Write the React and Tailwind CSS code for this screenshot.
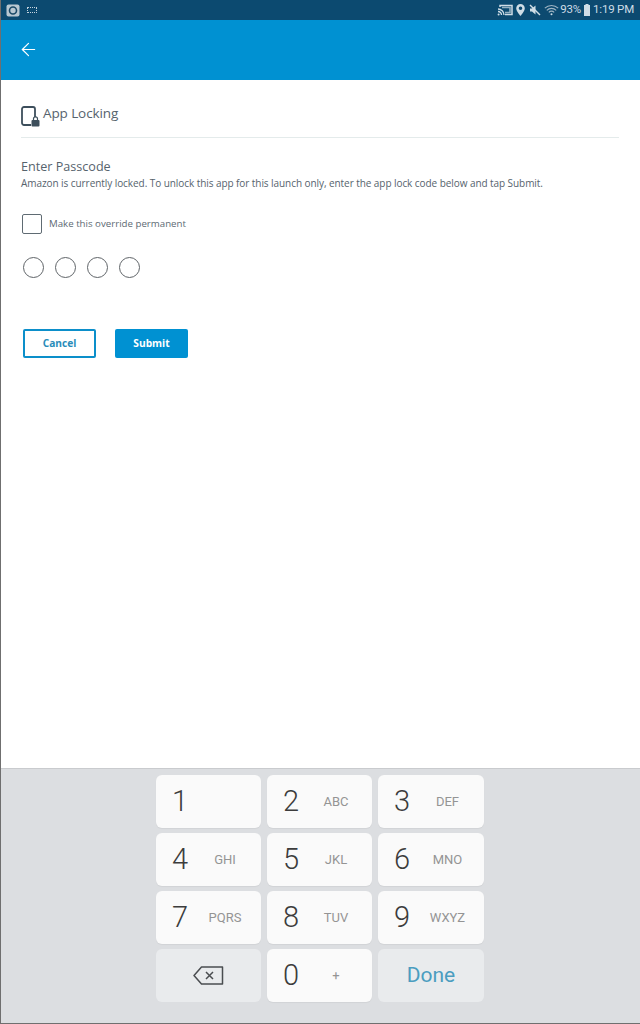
import { ArrowLeft } from "lucide-react";

const keys = [
    ["1", ""], ["2", "ABC"], ["3", "DEF"],
    ["4", "GHI"], ["5", "JKL"], ["6", "MNO"],
    ["7", "PQRS"], ["8", "TUV"], ["9", "WXYZ"],
];

function NumKey({ num, sub }) {
    return (
        <div className="relative h-[53px] rounded-md bg-[#fafafa] shadow-[0_1px_1px_rgba(0,0,0,0.05)]">
            <span className="absolute left-[16px] top-[7px] text-[29px] leading-[38px] font-light text-[#3c3c3c]" style={{ fontFamily: "Roboto" }}>{num}</span>
            <span className="absolute left-[46px] right-[13px] top-[17px] text-center text-[13px] leading-[20px] text-[#949494]" style={{ fontFamily: "Roboto" }}>{sub}</span>
        </div>
    );
}

export default function App() {
    return (
        <div className="flex h-[1024px] w-[640px] flex-col overflow-hidden border-l border-b border-[#6f6f6f] bg-white font-['Open_Sans','Noto_Sans',sans-serif]">
            {/* status bar */}
            <div className="flex h-[20px] items-center justify-between bg-[#0c4a70] pl-[5px] pr-[6px] text-white">
                <div className="flex items-center gap-[7px]">
                    <svg width="14" height="13" viewBox="0 0 14 13">
                        <rect x="0.5" y="0.5" width="13" height="12" rx="2" fill="#b9c8d2" />
                        <circle cx="7" cy="6.5" r="3.5" fill="none" stroke="#1b4a68" strokeWidth="1.6" />
                    </svg>
                    <div className="h-[6px] w-[10px] rounded-[1px] border border-dotted border-[#c7d5df]" />
                </div>
                <div className="flex items-center text-[11.5px] leading-none tracking-[-0.2px] text-[#cfdde6] font-['Roboto',sans-serif]">
                    <svg width="16" height="12" viewBox="0 0 16 12" fill="none" stroke="#cfdde6" className="mr-[3px]">
                        <path d="M3 3V1.5h12v9H8" strokeWidth="1.5" />
                        <path d="M1 5a6 6 0 0 1 6 6M1 7.5A3.5 3.5 0 0 1 4.5 11" strokeWidth="1.3" />
                        <path d="M5 3.5h8v5H8" strokeWidth="1.6" opacity="0.7" />
                        <circle cx="1.6" cy="10.4" r="1" fill="#cfdde6" stroke="none" />
                    </svg>
                    <svg width="9" height="12" viewBox="0 0 9 12" className="mr-[4px]">
                        <path fillRule="evenodd" d="M4.5 0A4.3 4.3 0 0 0 .2 4.3C.2 7.3 4.5 12 4.5 12s4.3-4.7 4.3-7.7A4.3 4.3 0 0 0 4.500 0zm0 6a1.800 1.800 0 1 1 0-3.600 1.800 1.800 0 0 1 0 3.600z" fill="#cfdde6" />
                    </svg>
                    <svg width="12" height="12" viewBox="0 0 12 12" className="mr-[3px]">
                        <path d="M1 4.500h2L6.500 1.500v9L3 7.500H1z" fill="#cfdde6" />
                        <path d="M1 1l10 10" stroke="#cfdde6" strokeWidth="1.400" />
                    </svg>
                    <svg width="15" height="12" viewBox="0 0 15 12" fill="none" stroke="#9fb5c4" strokeWidth="1.100" className="mr-[1px]">
                        <path d="M.8 4.200a9.500 9.500 0 0 1 13.400 0M2.800 6.300a6.600 6.600 0 0 1 9.400 0M4.800 8.300a3.800 3.800 0 0 1 5.400 0" />
                        <circle cx="7.500" cy="10.300" r="1" fill="#cfdde6" stroke="none" />
                    </svg>
                    <span className="mr-[3px]">93%</span>
                    <svg width="6" height="12" viewBox="0 0 6 12" className="mr-[3px]">
                        <path d="M1.500 0h3v1H6v11H0V1h1.500z" fill="#cfdde6" />
                    </svg>
                    <span>1:19 PM</span>
                </div>
            </div>

            {/* header */}
            <div className="flex h-[60px] items-center bg-[#0091d2] pl-[17px]">
                <ArrowLeft size={21} strokeWidth={1.4} className="-mt-[2px] text-white" />
            </div>

            {/* content */}
            <div className="flex-1 pl-[20px] pr-[21px]">
                <div className="flex h-[58px] items-start border-b border-[#e4ebeb] pt-[23px]">
                    <svg width="19" height="21" viewBox="0 0 19 21" fill="none" className="mt-[3px] shrink-0">
                        <path d="M10 19H3a2 2 0 0 1-2-2V3a2 2 0 0 1 2-2h9a2 2 0 0 1 2 2v8" stroke="#3d4f5c" strokeWidth="1.800" />
                        <path d="M12.500 14v-1.200a2 2 0 0 1 4 0V14" stroke="#3d4f5c" strokeWidth="1.200" />
                        <rect x="10.500" y="14" width="8" height="6.500" rx="1" fill="#3d4f5c" />
                    </svg>
                    <span className="ml-[3px] text-[13.500px] leading-[20px] tracking-[-0.1px] text-[#56636d]">App Locking</span>
                </div>
                <div className="mt-[20px] text-[12.600px] leading-[18px] text-[#56636d]">Enter Passcode</div>
                <div className="text-[10px] leading-[14px] tracking-[-0.065px] text-[#56636d]">Amazon is currently locked. To unlock this app for this launch only, enter the app lock code below and tap Submit.</div>
                <div className="mt-[24px] flex items-center">
                    <div className="ml-px h-[20px] w-[20px] rounded-[2px] border border-[#5f6b73]" />
                    <span className="ml-[7px] text-[9.700px] leading-[20px] text-[#5d6a73]">Make this override permanent</span>
                </div>
                <div className="ml-[2px] mt-[23px] flex gap-[11px]">
                    <div className="h-[21px] w-[21px] rounded-full border border-[#5f6468]" />
                    <div className="h-[21px] w-[21px] rounded-full border border-[#5f6468]" />
                    <div className="h-[21px] w-[21px] rounded-full border border-[#5f6468]" />
                    <div className="h-[21px] w-[21px] rounded-full border border-[#5f6468]" />
                </div>
                <div className="ml-[2px] mt-[51px] flex gap-[19px]">
                    <button className="h-[29px] w-[73px] rounded-[2px] border-2 border-[#0c8fca] bg-white text-[10.200px] font-bold text-[#2a8cba]">Cancel</button>
                    <button className="h-[29px] w-[73px] rounded-[2px] bg-[#0091d2] text-[10.200px] font-bold text-white">Submit</button>
                </div>
            </div>

            {/* keypad */}
            <div className="h-[255px] border-t border-[#c9cbce] bg-[#dcdee1] pl-[155px] pt-[6px]">
                <div className="grid w-[328px] grid-cols-[105px_105px_106px] gap-x-[6px] gap-y-[5px]">
                    {keys.map(([num, sub]) => (
                        <NumKey key={num} num={num} sub={sub} />
                    ))}
                    <div className="flex h-[53px] items-center justify-center rounded-md bg-[#e9ebed]">
                        <svg width="31" height="19" viewBox="0 0 31 19" fill="none" stroke="#4a4d50" strokeWidth="1.500">
                            <path d="M8.500 1H29.500V18H8.500L1 9.500z" strokeLinejoin="round" />
                            <path d="M13 6l7 7M20 6l-7 7" />
                        </svg>
                    </div>
                    <NumKey num="0" sub="+" />
                    <div className="flex h-[53px] items-center justify-center rounded-md bg-[#e9ebed] text-[21px] text-[#4b9dc0]" style={{ fontFamily: "Roboto" }}>Done</div>
                </div>
            </div>
        </div>
    );
}
